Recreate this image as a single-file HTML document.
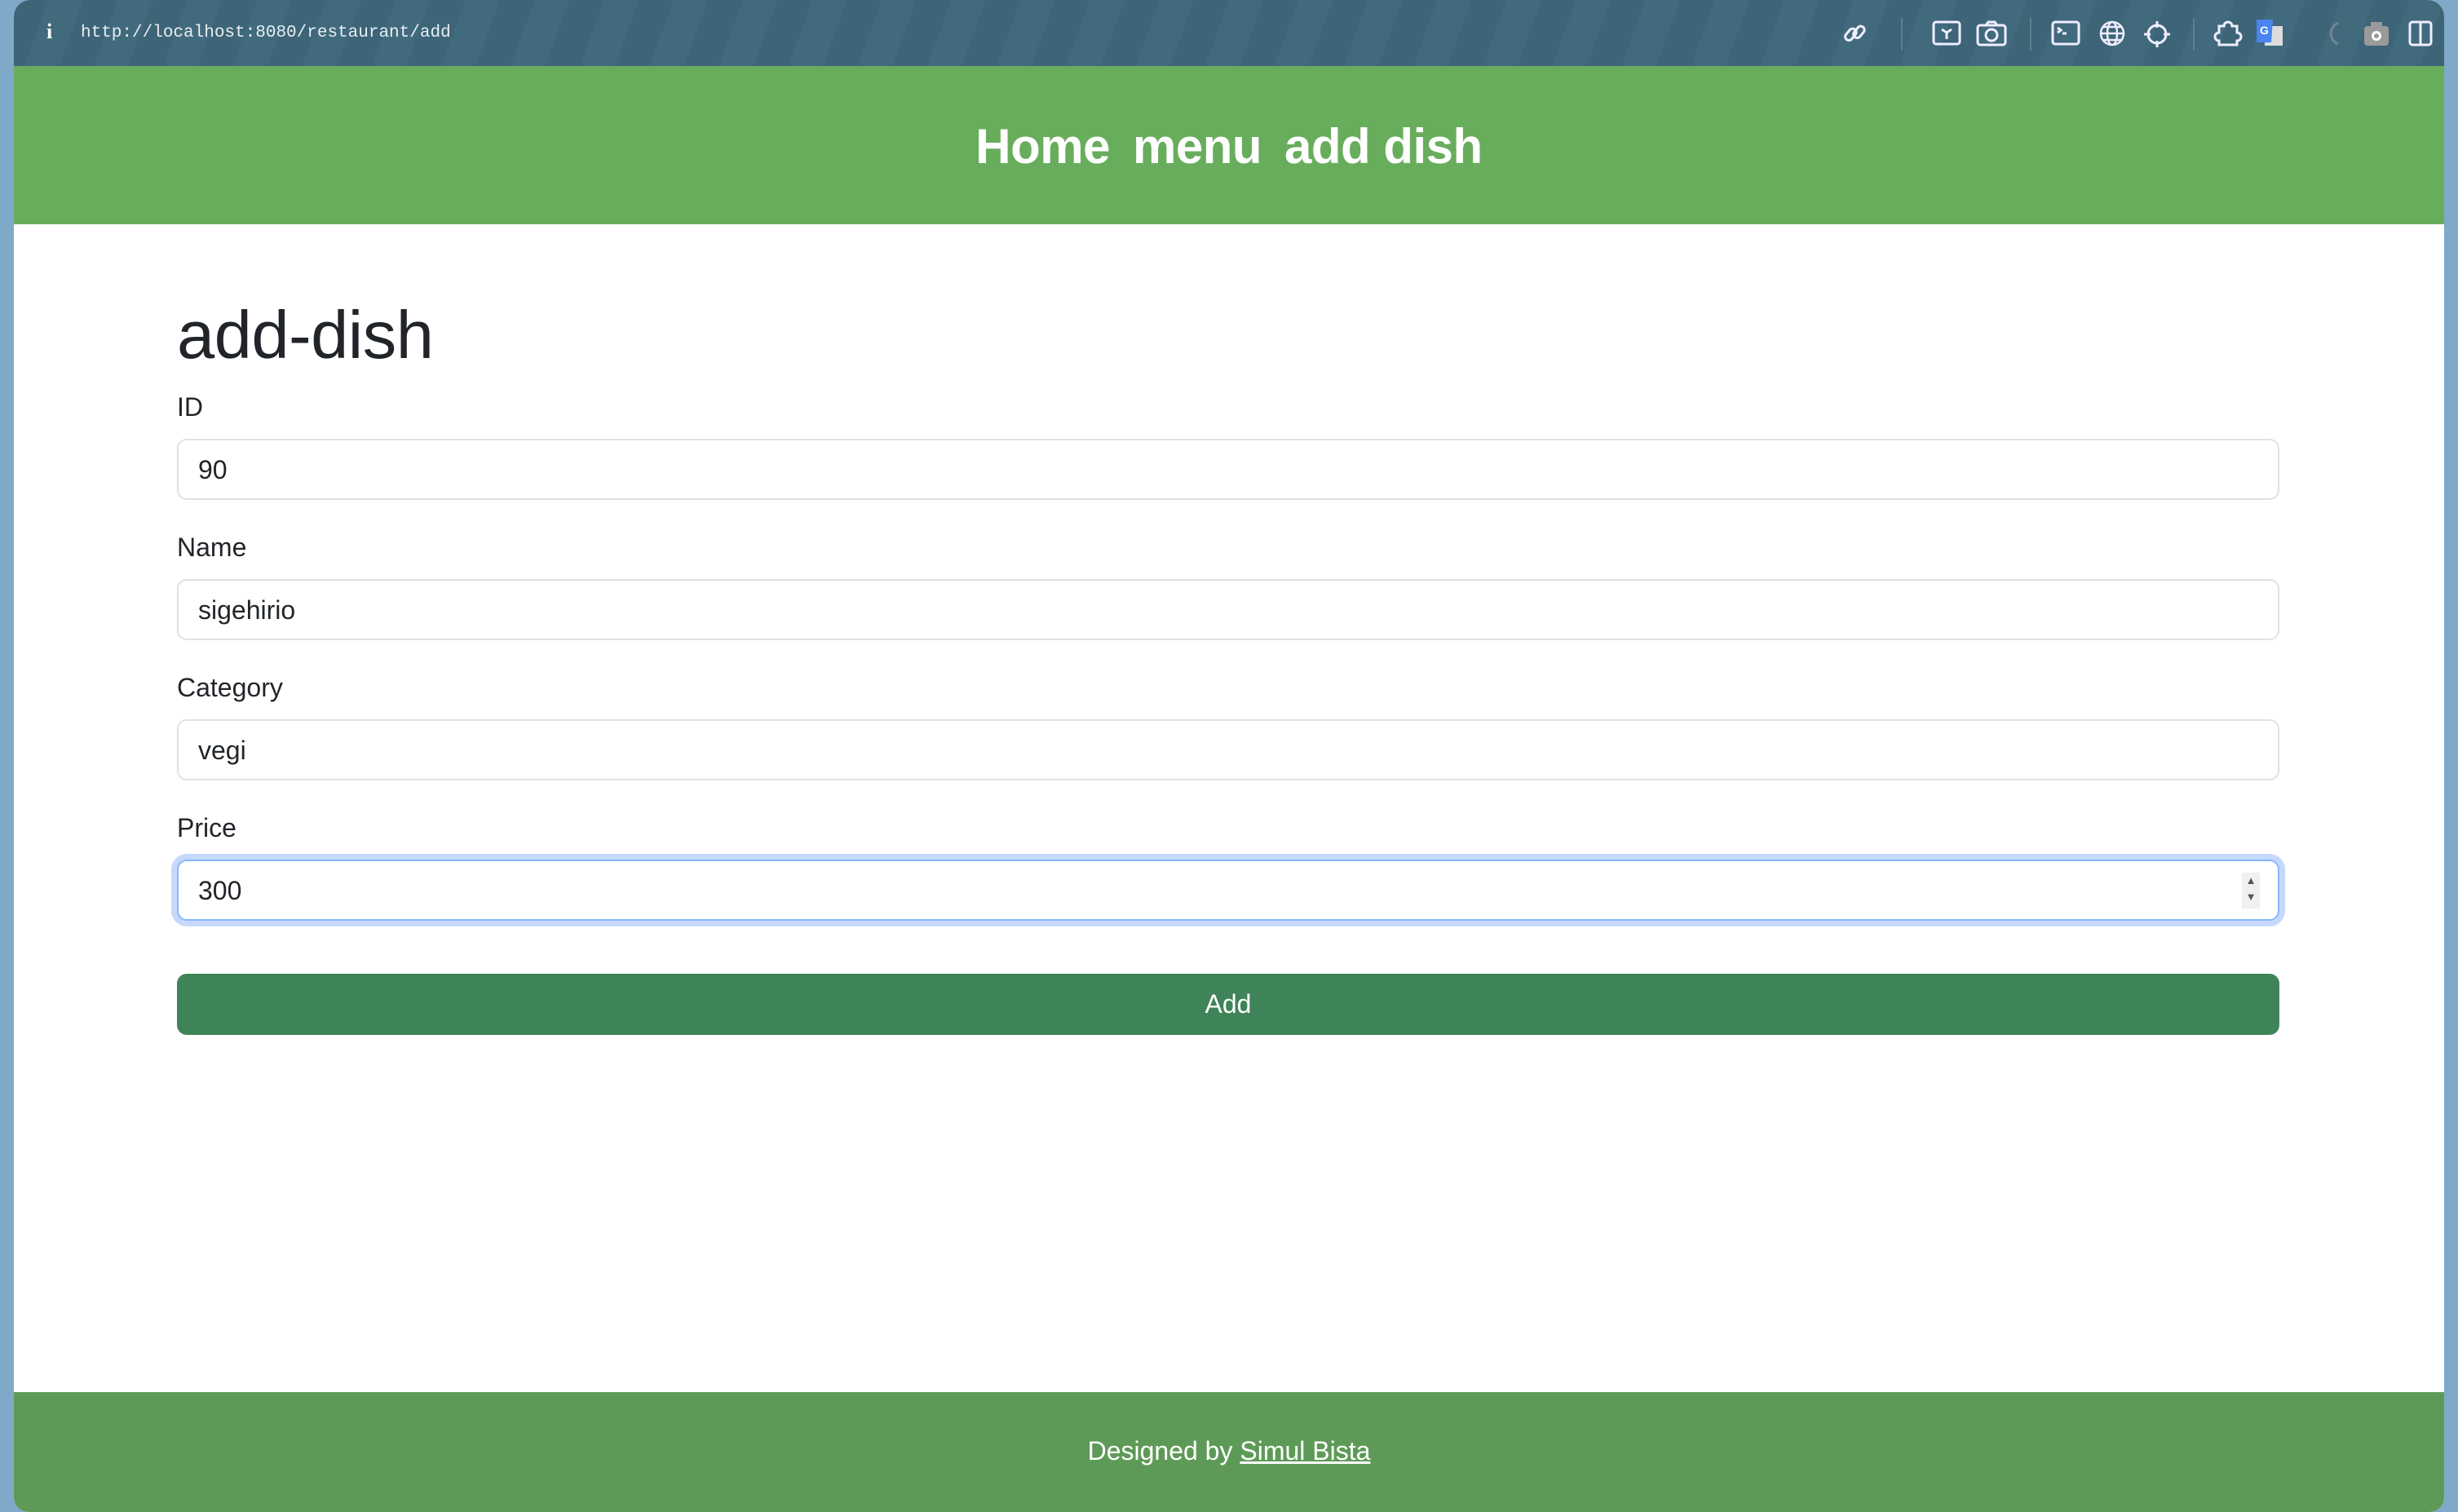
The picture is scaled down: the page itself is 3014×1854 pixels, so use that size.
<!DOCTYPE html>
<html><head><meta charset="utf-8"><style>
html,body{margin:0;padding:0;width:3014px;height:1854px;overflow:hidden;font-family:"Liberation Sans",Arial,sans-serif;}
body{background:#7fa9c8;position:relative;}
.win{position:absolute;left:17px;top:0;width:2980px;height:1854px;border-radius:20px 20px 18px 18px;overflow:hidden;background:#fff;}
.bar{position:absolute;left:0;top:0;width:100%;height:81px;background:repeating-linear-gradient(110deg,#3d6477 0 40px,#416a7d 40px 80px);}
.url{position:absolute;left:82px;top:29px;font-family:"Liberation Mono",monospace;font-size:21px;color:#e8eef2;}
.info{position:absolute;left:40px;top:24px;font:bold 26px "Liberation Serif",serif;color:#fff;}
.hdr{position:absolute;left:0;top:81px;width:100%;height:194px;background:#68ad5c;text-align:center;}
.hdr span{display:inline-block;color:#fff;font-weight:bold;font-size:60px;line-height:198px;margin:0 14px;letter-spacing:-0.5px;}
.main{position:absolute;left:200px;top:0;width:2578px;}
h1{position:absolute;top:363px;left:0;margin:0;font-size:83px;font-weight:normal;color:#212529;letter-spacing:-0.5px;}
.lbl{position:absolute;left:0;font-size:32px;color:#212529;}
.inp{position:absolute;left:0;width:2574px;height:71px;border:2px solid #dee2e6;border-radius:12px;box-sizing:content-box;}
.inp span{position:absolute;left:24px;top:18px;font-size:32px;color:#212529;}
.focus{border-color:#86b7fe;box-shadow:0 0 0 7px #c6d9fc;}
.btn{position:absolute;left:0;top:1194px;width:2578px;height:75px;background:#3f8459;border-radius:12px;color:#fff;text-align:center;line-height:75px;font-size:32px;}
.foot{position:absolute;left:0;top:1707px;width:100%;height:147px;background:#5e9a57;text-align:center;color:#fff;font-size:32px;line-height:145px;}
.foot u{text-decoration:underline;}
.ic{position:absolute;top:24px;}
.sep{position:absolute;top:22px;width:2px;height:40px;background:#5c8093;}
</style></head><body>
<div class="win">
 <div class="bar">
  <div class="info">i</div>
  <div class="url">http://localhost:8080/restaurant/add</div>
  <svg class="ic" style="left:2240px" width="34" height="34" viewBox="0 0 34 34" fill="none" stroke="#eef" stroke-width="3"><rect x="4" y="14" width="16" height="9" rx="4.5" transform="rotate(-50 12 18)"/><rect x="14" y="11" width="16" height="9" rx="4.5" transform="rotate(-50 22 15)"/></svg>
  <div class="sep" style="left:2314px"></div>
  <svg class="ic" style="left:2352px" width="36" height="34" viewBox="0 0 36 34" fill="none" stroke="#eef" stroke-width="3"><rect x="2" y="3" width="32" height="27" rx="3"/><path d="M12 12 l6 4 6-4 M18 16v8" /></svg>
  <svg class="ic" style="left:2406px" width="38" height="34" viewBox="0 0 38 34" fill="none" stroke="#eef" stroke-width="3"><rect x="2" y="7" width="34" height="24" rx="3"/><circle cx="19" cy="19" r="7"/><path d="M12 7l3-4h8l3 4"/></svg>
  <div class="sep" style="left:2472px"></div>
  <svg class="ic" style="left:2498px" width="36" height="34" viewBox="0 0 36 34" fill="none" stroke="#eef" stroke-width="3"><rect x="2" y="3" width="32" height="27" rx="3"/><path d="M8 10l4 3-4 3M14 17h5"/></svg>
  <svg class="ic" style="left:2556px" width="34" height="34" viewBox="0 0 34 34" fill="none" stroke="#eef" stroke-width="2.5"><circle cx="17" cy="17" r="14"/><ellipse cx="17" cy="17" rx="6" ry="14"/><path d="M3 17h28M6 9h22M6 25h22"/></svg>
  <svg class="ic" style="left:2610px" width="36" height="36" viewBox="0 0 36 36" fill="none" stroke="#eef" stroke-width="3"><circle cx="18" cy="18" r="11"/><path d="M18 2v8M18 26v8M2 18h8M26 18h8"/></svg>
  <div class="sep" style="left:2672px"></div>
  <svg class="ic" style="left:2696px" width="40" height="34" viewBox="0 0 40 34" fill="none" stroke="#eef" stroke-width="3"><path d="M8 8h6a5 5 0 0 1 10 0h6v8a5 5 0 0 1 0 10v5h-22v-5a5 5 0 0 1 0-10z"/></svg>
  <svg class="ic" style="left:2750px" width="34" height="34" viewBox="0 0 34 34"><rect x="10" y="8" width="22" height="24" fill="#ddd"/><path d="M0 0h20l-2 28h-18z" fill="#4a84f0"/><text x="4" y="18" fill="#fff" font-size="14" font-weight="bold" font-family="Liberation Sans">G</text></svg>
  <svg class="ic" style="left:2830px" width="28" height="34" viewBox="0 0 28 34" fill="none" stroke="#6f8692" stroke-width="3"><path d="M20 4a14 14 0 0 0 0 26"/></svg>
  <svg class="ic" style="left:2880px" width="34" height="34" viewBox="0 0 34 34"><rect x="2" y="8" width="30" height="24" rx="4" fill="#9a9a9a"/><rect x="10" y="3" width="14" height="8" fill="#9a9a9a"/><circle cx="17" cy="20" r="6" fill="#fff"/><circle cx="17" cy="20" r="3" fill="#9a9a9a"/></svg>
  <svg class="ic" style="left:2936px" width="30" height="34" viewBox="0 0 30 34" fill="none" stroke="#eef" stroke-width="3"><rect x="2" y="3" width="26" height="28" rx="3"/><path d="M15 3v28"/></svg>
 </div>
 <div class="hdr"><span>Home</span><span>menu</span><span>add dish</span></div>
 <div class="main">
  <h1>add-dish</h1>
  <div class="lbl" style="top:481px">ID</div>
  <div class="inp" style="top:538px"><span>90</span></div>
  <div class="lbl" style="top:653px">Name</div>
  <div class="inp" style="top:710px"><span>sigehirio</span></div>
  <div class="lbl" style="top:825px">Category</div>
  <div class="inp" style="top:882px"><span>vegi</span></div>
  <div class="lbl" style="top:997px">Price</div>
  <div class="inp focus" style="top:1054px"><span>300</span>
   <div style="position:absolute;right:22px;top:14px;width:22px;height:44px;background:#f0f0f0;font-size:13px;color:#555;text-align:center;line-height:20px">▲<br>▼</div></div>
  <div class="btn">Add</div>
 </div>
 <div class="foot">Designed by <u>Simul Bista</u></div>
</div>
</body></html>
